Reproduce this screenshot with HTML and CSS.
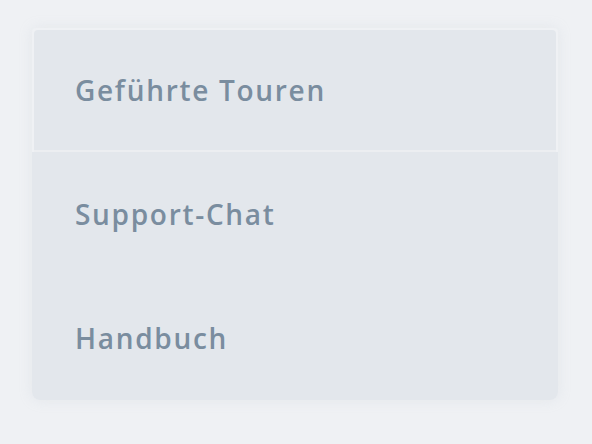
FILE: index.html
```html
<!DOCTYPE html>
<html lang="de">
<head>
<meta charset="utf-8">
<link rel="stylesheet" href="styles.css">
</head>
<body>
<div class="page">
  <ul class="menu">
    <li class="item item-active">Geführte Touren</li>
    <li class="item">Support-Chat</li>
    <li class="item">Handbuch</li>
  </ul>
</div>
</body>
</html>
```
FILE: styles.css
```css
html, body {
  margin: 0;
  padding: 0;
  background: #eff1f4;
}
.page {
  width: 592px;
  height: 444px;
  box-sizing: border-box;
  padding: 28px 34px 0 32px;
}
.menu {
  list-style: none;
  margin: 0;
  padding: 0;
  width: 526px;
  display: flex;
  flex-direction: column;
  border-radius: 4px 4px 8px 8px;
  box-shadow: 0 0 14px rgba(180, 188, 200, 0.18);
}
.item {
  height: 124px;
  box-sizing: border-box;
  display: flex;
  align-items: center;
  padding-left: 43px;
  background: #e3e7ec;
  font-family: "Open Sans", sans-serif;
  font-weight: 600;
  font-size: 28px;
  letter-spacing: 1.7px;
  color: #7a8d9f;
}
.item:last-child {
  border-radius: 0 0 8px 8px;
}
.item-active {
  height: 120px;
  margin: 2px 2px 2px 2px;
  padding-left: 41px;
  border-radius: 4px 4px 0 0;
  box-shadow: 0 2px 0 #eceef1;
}
```
